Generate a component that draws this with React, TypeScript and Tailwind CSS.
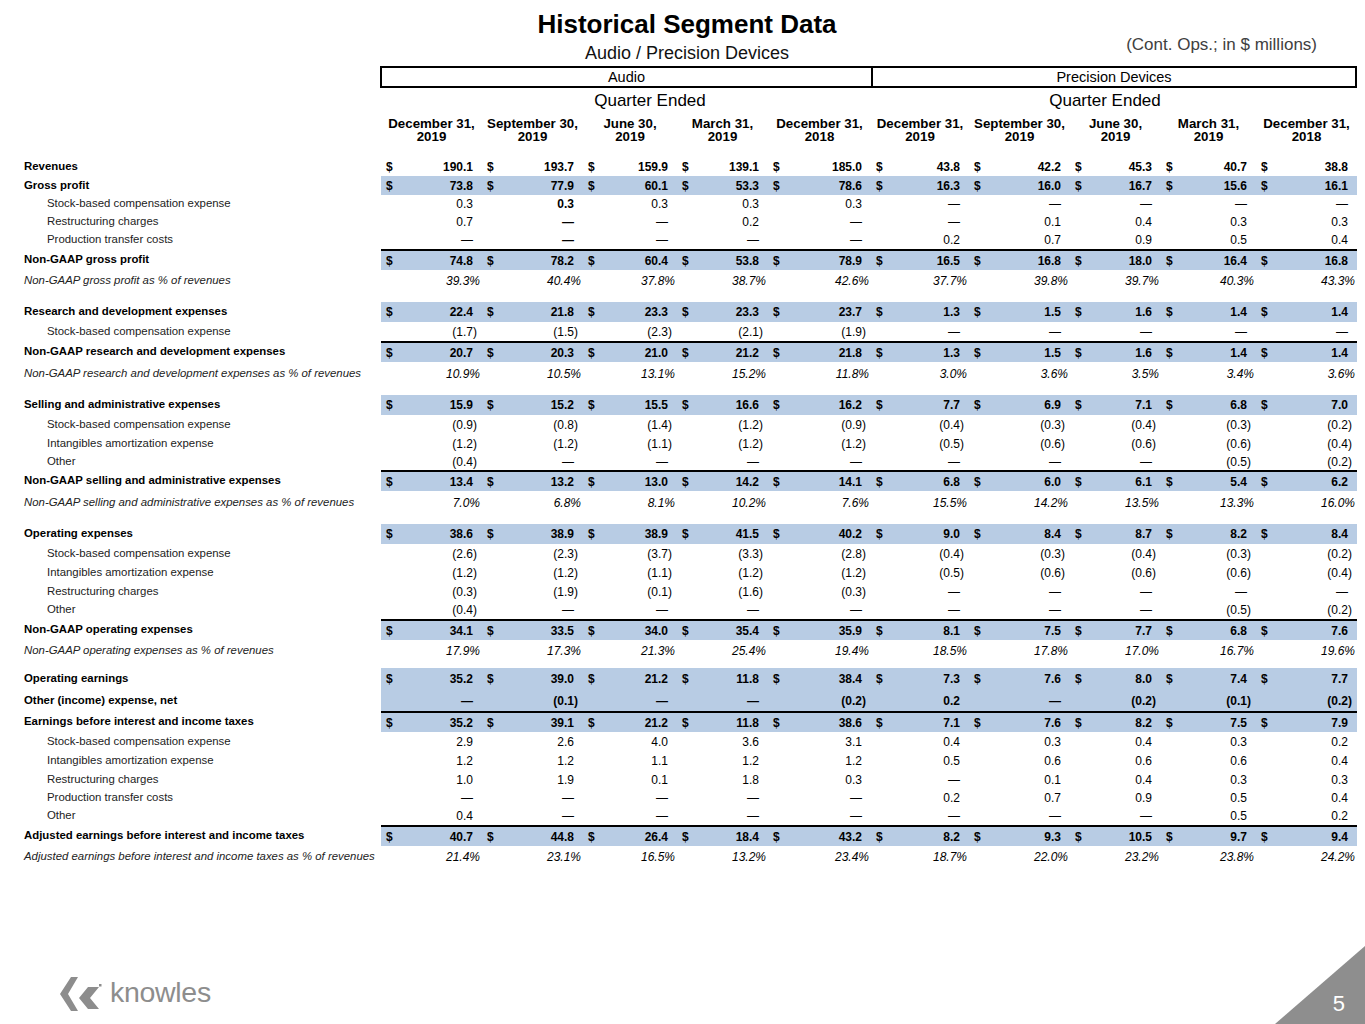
import React from "react";

type Row = {
  label?: string;
  kind: "bold" | "sub" | "pct" | "gap";
  h: string;
  vals?: string[];
  dollar?: boolean;
  band?: boolean;
  line?: boolean;
  boldAt?: number[];
};

const colW = [
  "w-[101px]",
  "w-[101px]",
  "w-[94px]",
  "w-[91px]",
  "w-[103px]",
  "w-[98px]",
  "w-[101px]",
  "w-[91px]",
  "w-[95px]",
  "w-[101px]",
];

const heads = [
  ["December 31,", "2019"],
  ["September 30,", "2019"],
  ["June 30,", "2019"],
  ["March 31,", "2019"],
  ["December 31,", "2018"],
  ["December 31,", "2019"],
  ["September 30,", "2019"],
  ["June 30,", "2019"],
  ["March 31,", "2019"],
  ["December 31,", "2018"],
];

const d = "—";

const rows: Row[] = [
  { label: "Revenues", kind: "bold", h: "h-[18px]", dollar: true, vals: ["190.1", "193.7", "159.9", "139.1", "185.0", "43.8", "42.2", "45.3", "40.7", "38.8"] },
  { label: "Gross profit", kind: "bold", h: "h-[19px]", dollar: true, band: true, vals: ["73.8", "77.9", "60.1", "53.3", "78.6", "16.3", "16.0", "16.7", "15.6", "16.1"] },
  { label: "Stock-based compensation expense", kind: "sub", h: "h-[18px]", boldAt: [1], vals: ["0.3", "0.3", "0.3", "0.3", "0.3", d, d, d, d, d] },
  { label: "Restructuring charges", kind: "sub", h: "h-[18px]", boldAt: [1], vals: ["0.7", d, d, "0.2", d, d, "0.1", "0.4", "0.3", "0.3"] },
  { label: "Production transfer costs", kind: "sub", h: "h-[18px]", boldAt: [1], vals: [d, d, d, d, d, "0.2", "0.7", "0.9", "0.5", "0.4"] },
  { label: "Non-GAAP gross profit", kind: "bold", h: "h-[21px]", dollar: true, band: true, line: true, vals: ["74.8", "78.2", "60.4", "53.8", "78.9", "16.5", "16.8", "18.0", "16.4", "16.8"] },
  { label: "Non-GAAP gross profit as % of revenues", kind: "pct", h: "h-[22px]", vals: ["39.3%", "40.4%", "37.8%", "38.7%", "42.6%", "37.7%", "39.8%", "39.7%", "40.3%", "43.3%"] },
  { kind: "gap", h: "h-[10px]" },
  { label: "Research and development expenses", kind: "bold", h: "h-[20px]", dollar: true, band: true, vals: ["22.4", "21.8", "23.3", "23.3", "23.7", "1.3", "1.5", "1.6", "1.4", "1.4"] },
  { label: "Stock-based compensation expense", kind: "sub", h: "h-[19px]", vals: ["(1.7)", "(1.5)", "(2.3)", "(2.1)", "(1.9)", d, d, d, d, d] },
  { label: "Non-GAAP research and development expenses", kind: "bold", h: "h-[21px]", dollar: true, band: true, line: true, vals: ["20.7", "20.3", "21.0", "21.2", "21.8", "1.3", "1.5", "1.6", "1.4", "1.4"] },
  { label: "Non-GAAP research and development expenses as % of revenues", kind: "pct", h: "h-[23px]", vals: ["10.9%", "10.5%", "13.1%", "15.2%", "11.8%", "3.0%", "3.6%", "3.5%", "3.4%", "3.6%"] },
  { kind: "gap", h: "h-[10px]" },
  { label: "Selling and administrative expenses", kind: "bold", h: "h-[20px]", dollar: true, band: true, vals: ["15.9", "15.2", "15.5", "16.6", "16.2", "7.7", "6.9", "7.1", "6.8", "7.0"] },
  { label: "Stock-based compensation expense", kind: "sub", h: "h-[19px]", vals: ["(0.9)", "(0.8)", "(1.4)", "(1.2)", "(0.9)", "(0.4)", "(0.3)", "(0.4)", "(0.3)", "(0.2)"] },
  { label: "Intangibles amortization expense", kind: "sub", h: "h-[19px]", vals: ["(1.2)", "(1.2)", "(1.1)", "(1.2)", "(1.2)", "(0.5)", "(0.6)", "(0.6)", "(0.6)", "(0.4)"] },
  { label: "Other", kind: "sub", h: "h-[17px]", vals: ["(0.4)", d, d, d, d, d, d, d, "(0.5)", "(0.2)"] },
  { label: "Non-GAAP selling and administrative expenses", kind: "bold", h: "h-[21px]", dollar: true, band: true, line: true, vals: ["13.4", "13.2", "13.0", "14.2", "14.1", "6.8", "6.0", "6.1", "5.4", "6.2"] },
  { label: "Non-GAAP selling and administrative expenses as % of revenues", kind: "pct", h: "h-[23px]", vals: ["7.0%", "6.8%", "8.1%", "10.2%", "7.6%", "15.5%", "14.2%", "13.5%", "13.3%", "16.0%"] },
  { kind: "gap", h: "h-[10px]" },
  { label: "Operating expenses", kind: "bold", h: "h-[20px]", dollar: true, band: true, vals: ["38.6", "38.9", "38.9", "41.5", "40.2", "9.0", "8.4", "8.7", "8.2", "8.4"] },
  { label: "Stock-based compensation expense", kind: "sub", h: "h-[19px]", vals: ["(2.6)", "(2.3)", "(3.7)", "(3.3)", "(2.8)", "(0.4)", "(0.3)", "(0.4)", "(0.3)", "(0.2)"] },
  { label: "Intangibles amortization expense", kind: "sub", h: "h-[19px]", vals: ["(1.2)", "(1.2)", "(1.1)", "(1.2)", "(1.2)", "(0.5)", "(0.6)", "(0.6)", "(0.6)", "(0.4)"] },
  { label: "Restructuring charges", kind: "sub", h: "h-[19px]", vals: ["(0.3)", "(1.9)", "(0.1)", "(1.6)", "(0.3)", d, d, d, d, d] },
  { label: "Other", kind: "sub", h: "h-[18px]", vals: ["(0.4)", d, d, d, d, d, d, d, "(0.5)", "(0.2)"] },
  { label: "Non-GAAP operating expenses", kind: "bold", h: "h-[21px]", dollar: true, band: true, line: true, vals: ["34.1", "33.5", "34.0", "35.4", "35.9", "8.1", "7.5", "7.7", "6.8", "7.6"] },
  { label: "Non-GAAP operating expenses as % of revenues", kind: "pct", h: "h-[22px]", vals: ["17.9%", "17.3%", "21.3%", "25.4%", "19.4%", "18.5%", "17.8%", "17.0%", "16.7%", "19.6%"] },
  { kind: "gap", h: "h-[6px]" },
  { label: "Operating earnings", kind: "bold", h: "h-[22px]", dollar: true, band: true, vals: ["35.2", "39.0", "21.2", "11.8", "38.4", "7.3", "7.6", "8.0", "7.4", "7.7"] },
  { label: "Other (income) expense, net", kind: "bold", h: "h-[21px]", band: true, vals: [d, "(0.1)", d, d, "(0.2)", "0.2", d, "(0.2)", "(0.1)", "(0.2)"] },
  { label: "Earnings before interest and income taxes", kind: "bold", h: "h-[21px]", dollar: true, band: true, line: true, vals: ["35.2", "39.1", "21.2", "11.8", "38.6", "7.1", "7.6", "8.2", "7.5", "7.9"] },
  { label: "Stock-based compensation expense", kind: "sub", h: "h-[20px]", vals: ["2.9", "2.6", "4.0", "3.6", "3.1", "0.4", "0.3", "0.4", "0.3", "0.2"] },
  { label: "Intangibles amortization expense", kind: "sub", h: "h-[18px]", vals: ["1.2", "1.2", "1.1", "1.2", "1.2", "0.5", "0.6", "0.6", "0.6", "0.4"] },
  { label: "Restructuring charges", kind: "sub", h: "h-[19px]", vals: ["1.0", "1.9", "0.1", "1.8", "0.3", d, "0.1", "0.4", "0.3", "0.3"] },
  { label: "Production transfer costs", kind: "sub", h: "h-[18px]", vals: [d, d, d, d, d, "0.2", "0.7", "0.9", "0.5", "0.4"] },
  { label: "Other", kind: "sub", h: "h-[18px]", vals: ["0.4", d, d, d, d, d, d, d, "0.5", "0.2"] },
  { label: "Adjusted earnings before interest and income taxes", kind: "bold", h: "h-[21px]", dollar: true, band: true, line: true, vals: ["40.7", "44.8", "26.4", "18.4", "43.2", "8.2", "9.3", "10.5", "9.7", "9.4"] },
  { label: "Adjusted earnings before interest and income taxes as % of revenues", kind: "pct", h: "h-[22px]", vals: ["21.4%", "23.1%", "16.5%", "13.2%", "23.4%", "18.7%", "22.0%", "23.2%", "23.8%", "24.2%"] },
];

// keeps numbers lined up the way an accounting format does
const Num = ({ v }: { v: string }) => {
  if (v.endsWith("%")) return <span className="italic">{v}</span>;
  if (v.startsWith("(")) return <span>{v}</span>;
  return (
    <span>
      {v}
      <span className="invisible">)</span>
    </span>
  );
};

const labelCls = {
  bold: "pl-[24px] font-bold text-black",
  sub: "pl-[47px] text-[#222]",
  pct: "pl-[24px] italic text-[#222]",
  gap: "",
};

const Logo = () => (
  <div className="flex items-center gap-[8px]">
    <svg width="42" height="36" viewBox="0 0 42 36" className="shrink-0">
      <polygon points="0,18 11,1 18,1 8,18 18,35 11,35" fill="#8d8d8d" />
      <polygon points="19,22 28,11 39,11 30,22 39,33 28,33" fill="#8d8d8d" />
      <rect x="39" y="8" width="2.5" height="2.5" fill="#8d8d8d" />
    </svg>
    <span className="text-[28.5px] leading-none text-[#8d8d8d] tracking-[-0.3px] -mt-[4px]">
      knowles
    </span>
  </div>
);

export default function App() {
  return (
    <div className="relative w-[1365px] h-[1024px] overflow-hidden bg-white text-black font-['Liberation_Sans',Arial,sans-serif] flex flex-col">
      {/* title */}
      <div className="pt-[9px] pl-[9px] text-center text-[26px] leading-[30px] font-bold">
        Historical Segment Data
      </div>
      <div className="grid grid-cols-[1fr_auto_1fr] h-[22px] mt-[3px]">
        <div />
        <div className="pl-[9px] text-[18px] leading-[22px] text-[#111]">Audio / Precision Devices</div>
        <div className="text-right pr-[48px] text-[17px] leading-[20px] text-[#404040] -mt-[7px]">
          (Cont. Ops.; in $ millions)
        </div>
      </div>

      {/* segment box */}
      <div className="flex mt-[2px]">
        <div className="w-[380px] shrink-0" />
        <div className="flex w-[977px] h-[22px] border-2 border-black text-[14.5px] leading-none">
          <div className="w-[491px] border-r-2 border-black flex items-center justify-center">Audio</div>
          <div className="flex-1 flex items-center justify-center">Precision Devices</div>
        </div>
      </div>

      <div className="flex mt-[3px] text-[17px] leading-[20px]">
        <div className="w-[381px] shrink-0" />
        <div className="w-[490px] text-center pl-[48px]">Quarter Ended</div>
        <div className="w-[486px] text-center pr-[18px]">Quarter Ended</div>
      </div>

      <div className="flex mt-[6px] text-[13.3px] leading-[13px] font-bold">
        <div className="w-[381px] shrink-0" />
        {heads.map((h, i) => (
          <div key={i} className={`${colW[i]} text-center`}>
            <div>{h[0]}</div>
            <div>{h[1]}</div>
          </div>
        ))}
      </div>

      {/* table body */}
      <div className="mt-[15px] flex flex-col text-[11.4px]">
        {rows.map((r, ri) =>
          r.kind === "gap" ? (
            <div key={ri} className={r.h} />
          ) : (
            <div key={ri} className={`flex ${r.h}`}>
              <div className={`w-[381px] shrink-0 flex items-center whitespace-nowrap ${labelCls[r.kind]}`}>
                {r.label}
              </div>
              <div
                className={`flex text-[12px] ${r.band ? "bg-[#b8cce4]" : ""} ${r.line ? "border-t-2 border-black" : ""} ${
                  r.kind === "bold" ? "font-bold" : ""
                }`}
              >
                {r.vals!.map((v, i) => (
                  <div
                    key={i}
                    className={`${colW[i]} flex items-center pl-[5px] ${r.kind === "pct" ? "pr-[2px]" : "pr-[5px]"} ${
                      r.boldAt?.includes(i) ? "font-bold" : ""
                    }`}
                  >
                    {r.dollar && <span>$</span>}
                    <span className="ml-auto">
                      <Num v={v} />
                    </span>
                  </div>
                ))}
              </div>
            </div>
          )
        )}
      </div>

      {/* footer */}
      <div className="mt-auto pl-[60px] pb-[12px]">
        <Logo />
      </div>

      <div className="absolute right-0 bottom-0 w-[90px] h-[78px] bg-[#8e8e8e] [clip-path:polygon(100%_0,100%_100%,0_100%)] flex items-end justify-end pr-[20px] pb-[9px]">
        <span className="text-white text-[22px] leading-none">5</span>
      </div>
    </div>
  );
}
